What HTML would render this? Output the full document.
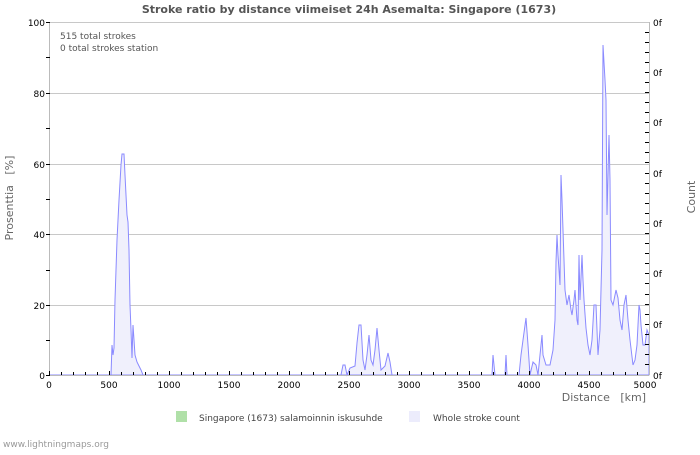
<!DOCTYPE html>
<html><head><meta charset="utf-8"><style>
body{margin:0;background:#fff;width:700px;height:450px;overflow:hidden;font-family:"Liberation Sans","DejaVu Sans",sans-serif}
</style></head><body>
<svg width="700" height="450" xmlns="http://www.w3.org/2000/svg" font-family="'DejaVu Sans','Liberation Sans',sans-serif">
<text x="349" y="13" text-anchor="middle" font-size="11" font-weight="bold" fill="#555">Stroke ratio by distance viimeiset 24h Asemalta: Singapore (1673)</text>
<g stroke="#c8c8c8" stroke-width="1">
<line x1="49" y1="93.5" x2="649" y2="93.5"/><line x1="49" y1="164.5" x2="649" y2="164.5"/><line x1="49" y1="234.5" x2="649" y2="234.5"/><line x1="49" y1="305.5" x2="649" y2="305.5"/>
<line x1="49" y1="22.5" x2="649" y2="22.5"/>
</g>
<polygon fill="#f0f0fc" stroke="#8a8aff" stroke-width="1" points="49,375 111,375 112,345 113,355 114,348 115,300 117,240 119,200 121,165 122,154 124,154 125,175 127,215 128,222 129,250 130,305 131,330 132,358 133,325 134,340 135,355 137,362 139,366 141,370 143,375 341,375 343,365 345,365 347,375 350,368 355,366 357,343 359,325 361,325 363,360 365,370 367,355 369,335 371,360 373,365 375,350 377,328 379,350 381,370 385,366 388,353 390,362 392,375 492,375 493,355 495,375 505,375 506,355 507,375 519,375 521,355 523,340 526,318 528,345 530,375 533,362 536,365 538,375 540,355 542,335 543,355 546,365 550,365 553,350 555,320 556,262 557,235 558,255 560,285 561,175 562,200 563,230 565,290 567,305 569,295 571,310 572,315 574,300 575,290 577,320 578,325 579,255 580,300 582,255 583,280 584,300 586,328 588,345 590,355 592,340 594,305 596,305 598,355 600,330 602,250 603,45 605,80 606,100 607,215 609,135 610,180 611,300 613,305 615,295 616,290 618,298 620,320 622,330 624,305 626,295 628,320 630,340 633,365 635,360 637,345 639,305 640,310 641,325 643,345 645,345 647,330 649,335 649,375"/>
<g stroke="#bbb" stroke-width="1"><line x1="49.5" y1="22" x2="49.5" y2="375"/><line x1="649.5" y1="22" x2="649.5" y2="375"/><line x1="49" y1="375.5" x2="649" y2="375.5"/></g>
<g stroke="#000" stroke-width="1">
<path d="M46 22.5h4M46 57.5h4M46 93.5h4M46 128.5h4M46 164.5h4M46 199.5h4M46 234.5h4M46 270.5h4M46 305.5h4M46 340.5h4M46 375.5h4"/>
<path d="M61.5 372v3M73.5 372v3M85.5 372v3M97.5 372v3M109.5 371v4M121.5 372v3M133.5 372v3M145.5 372v3M157.5 372v3M169.5 371v4M181.5 372v3M193.5 372v3M205.5 372v3M217.5 372v3M229.5 371v4M241.5 372v3M253.5 372v3M265.5 372v3M277.5 372v3M289.5 371v4M301.5 372v3M313.5 372v3M325.5 372v3M337.5 372v3M349.5 371v4M361.5 372v3M373.5 372v3M385.5 372v3M397.5 372v3M409.5 371v4M421.5 372v3M433.5 372v3M445.5 372v3M457.5 372v3M469.5 371v4M481.5 372v3M493.5 372v3M505.5 372v3M517.5 372v3M529.5 371v4M541.5 372v3M553.5 372v3M565.5 372v3M577.5 372v3M589.5 371v4M601.5 372v3M613.5 372v3M625.5 372v3M637.5 372v3M49.5 371v4"/>
<path d="M645 32.5h4M645 42.5h4M645 52.5h4M645 62.5h4M645 72.5h4M645 82.5h4M645 92.5h4M645 102.5h4M645 112.5h4M645 122.5h4M645 132.5h4M645 142.5h4M645 152.5h4M645 162.5h4M645 173.5h4M645 183.5h4M645 193.5h4M645 203.5h4M645 213.5h4M645 223.5h4M645 233.5h4M645 243.5h4M645 253.5h4M645 263.5h4M645 273.5h4M645 283.5h4M645 294.5h4M645 304.5h4M645 314.5h4M645 324.5h4M645 334.5h4M645 344.5h4M645 354.5h4M645 364.5h4"/>
</g>
<g font-size="9" fill="#000" text-anchor="end">
<text x="45" y="26">100</text><text x="45" y="97">80</text><text x="45" y="168">60</text><text x="45" y="238">40</text><text x="45" y="309">20</text><text x="45" y="379">0</text>
</g>
<g font-size="9" fill="#000" text-anchor="middle">
<text x="49" y="388">0</text><text x="109" y="388">500</text><text x="169" y="388">1000</text><text x="229" y="388">1500</text><text x="289" y="388">2000</text><text x="349" y="388">2500</text><text x="409" y="388">3000</text><text x="469" y="388">3500</text><text x="529" y="388">4000</text><text x="589" y="388">4500</text><text x="645" y="388">5000</text>
</g>
<g font-size="9" fill="#000">
<text x="653" y="26">0f</text><text x="653" y="76">0f</text><text x="653" y="126">0f</text><text x="653" y="177">0f</text><text x="653" y="227">0f</text><text x="653" y="277">0f</text><text x="653" y="328">0f</text><text x="653" y="379">0f</text>
</g>
<text x="60" y="39" font-size="9" fill="#555">515 total strokes</text>
<text x="60" y="51" font-size="9" fill="#555">0 total strokes station</text>
<text x="646" y="401" font-size="11" fill="#666" text-anchor="end">Distance&#160;&#160;&#160;[km]</text>
<text transform="translate(13,198) rotate(-90)" font-size="11" fill="#666" text-anchor="middle">Prosenttia&#160;&#160;&#160;[%]</text>
<text transform="translate(695,197) rotate(-90)" font-size="11" fill="#666" text-anchor="middle">Count</text>
<rect x="176" y="411" width="11" height="11" fill="#b0e0a8"/>
<text x="199" y="421" font-size="9" fill="#444">Singapore (1673) salamoinnin iskusuhde</text>
<rect x="409" y="411" width="11" height="11" fill="#ececfc"/>
<text x="433" y="421" font-size="9" fill="#444">Whole stroke count</text>
<text x="3" y="447" font-size="9" fill="#999">www.lightningmaps.org</text>
</svg>
</body></html>
